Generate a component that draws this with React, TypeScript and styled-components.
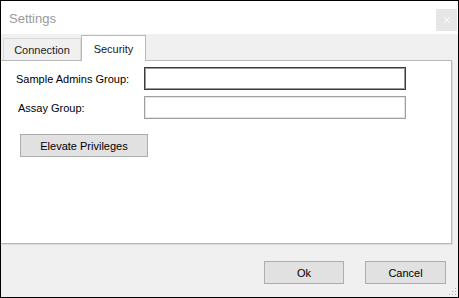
import React from "react";
import styled, { createGlobalStyle } from "styled-components";

const Global = createGlobalStyle`
  html, body { margin: 0; padding: 0; background: #fff; }
  * { box-sizing: border-box; }
`;

const Window = styled.div`
  position: relative;
  width: 459px;
  height: 298px;
  border: 1px solid #000;
  background: #f0f0f0;
  display: flex;
  flex-direction: column;
  font-family: "Liberation Sans", Arial, sans-serif;
  font-size: 11px;
  color: #000;
`;

const TitleBar = styled.div`
  height: 33px;
  flex: none;
  background: #fff;
  display: flex;
  align-items: flex-start;
`;

const Title = styled.div`
  margin: 10px 0 0 8px;
  font-size: 13px;
  color: #9a9a9a;
  line-height: 16px;
`;

const CloseButton = styled.div`
  margin: 8px 1px 0 auto;
  width: 21px;
  height: 22px;
  background: #e6e6e6;
  display: flex;
  align-items: center;
  justify-content: center;
`;

const TabStrip = styled.div`
  height: 26px;
  flex: none;
  display: flex;
  align-items: flex-end;
  padding-left: 2px;
`;

const Tab = styled.div<{ $active?: boolean }>`
  position: relative;
  display: flex;
  align-items: center;
  justify-content: center;
  width: ${(p) => (p.$active ? 65 : 78)}px;
  height: ${(p) => (p.$active ? 26 : 22)}px;
  margin-bottom: ${(p) => (p.$active ? -1 : 0)}px;
  z-index: ${(p) => (p.$active ? 1 : 0)};
  background: ${(p) => (p.$active ? "#fff" : "#f0f0f0")};
  border: 1px solid ${(p) => (p.$active ? "#b9b9b9" : "#d9d9d9")};
  border-bottom: none;
  padding-top: ${(p) => (p.$active ? 0 : 1)}px;
  color: #1a1a1a;
`;

const Panel = styled.div`
  flex: none;
  height: 184px;
  margin-right: 6px;
  background: #fff;
  border: 1px solid #b9b9b9;
  border-left: none;
  box-shadow: 1px 1px 0 #dcdcdc;
  padding: 6px 0 0 15px;
  display: flex;
  flex-direction: column;
  align-items: flex-start;
`;

const Form = styled.div`
  display: grid;
  grid-template-columns: 128px 262px;
  row-gap: 6px;
  align-items: center;
`;

const Label = styled.div<{ $indent?: number }>`
  padding-left: ${(p) => p.$indent ?? 0}px;
`;

const Field = styled.div<{ $focused?: boolean }>`
  height: 23px;
  background: #fff;
  border: 1px solid ${(p) => (p.$focused ? "#3c3c3c" : "#a0a0a0")};
  box-shadow: inset 0 0 0 1px ${(p) => (p.$focused ? "#9a9a9a" : "#e3e3e3")};
`;

const Button = styled.div<{ $width: number }>`
  width: ${(p) => p.$width}px;
  height: 23px;
  background: #e1e1e1;
  border: 1px solid #adadad;
  display: flex;
  align-items: center;
  justify-content: center;
  color: #000;
`;

const ElevateWrap = styled.div`
  margin: 15px 0 0 4px;
`;

const Footer = styled.div`
  flex: 1;
  display: flex;
  justify-content: flex-end;
  align-items: flex-start;
  gap: 21px;
  padding: 17px 12px 0 0;
`;

const Grip = styled.svg`
  position: absolute;
  right: 1px;
  bottom: 1px;
`;

export default function App() {
  return (
    <>
      <Global />
      <Window>
        <TitleBar>
          <Title>Settings</Title>
          <CloseButton>
            <svg width="8" height="8" viewBox="0 0 8 8">
              <path d="M1 1 L7 7 M7 1 L1 7" stroke="#ffffff" strokeWidth="1" />
            </svg>
          </CloseButton>
        </TitleBar>
        <TabStrip>
          <Tab>Connection</Tab>
          <Tab $active>Security</Tab>
        </TabStrip>
        <Panel>
          <Form>
            <Label>Sample Admins Group:</Label>
            <Field $focused />
            <Label $indent={2}>Assay Group:</Label>
            <Field />
          </Form>
          <ElevateWrap>
            <Button $width={128}>Elevate Privileges</Button>
          </ElevateWrap>
        </Panel>
        <Footer>
          <Button $width={80}>Ok</Button>
          <Button $width={81}>Cancel</Button>
        </Footer>
        <Grip width="8" height="8" viewBox="0 0 8 8">
          <rect x="6" y="0" width="1" height="1" fill="#b0b0b0" />
          <rect x="3" y="3" width="1" height="1" fill="#b0b0b0" />
          <rect x="6" y="3" width="1" height="1" fill="#b0b0b0" />
          <rect x="0" y="6" width="1" height="1" fill="#b0b0b0" />
          <rect x="3" y="6" width="1" height="1" fill="#b0b0b0" />
          <rect x="6" y="6" width="1" height="1" fill="#b0b0b0" />
        </Grip>
      </Window>
    </>
  );
}
